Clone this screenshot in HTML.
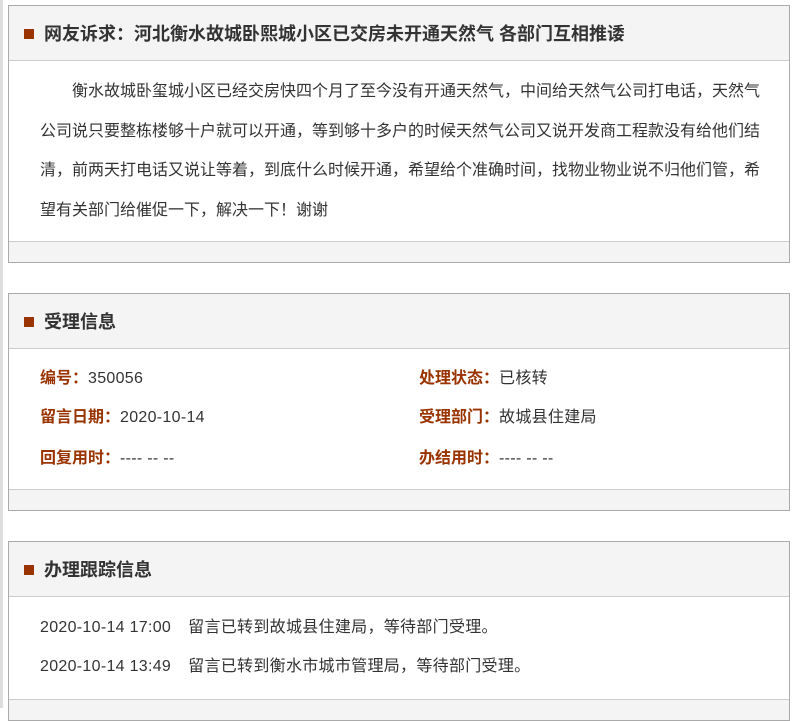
<!DOCTYPE html>
<html><head><meta charset="utf-8"><style>
body{margin:0;background:#fff;font-family:"Liberation Sans","Microsoft YaHei","Noto Sans CJK SC",sans-serif;color:#333;width:792px;height:708px;overflow:hidden;position:relative}
.strip{position:absolute;left:0;top:0;width:3px;height:708px;background:#ddd}
.box{position:absolute;left:8px;width:780px;border:1px solid #aaa;background:#fff}
.hd{height:54px;background:#f4f4f4;border-bottom:1px solid #ccc;position:relative}
.hd i{position:absolute;left:15px;top:23px;width:10px;height:10px;background:#993300}
.hd span{position:absolute;left:35px;top:0;line-height:56px;font-size:18px;font-weight:bold;color:#333}
.ft{height:20px;background:#f4f4f4;border-top:1px solid #ccc}
.txt{padding:11px 0 11px 31px;font-size:16px;line-height:39.5px;letter-spacing:0;white-space:nowrap}
.rows{position:relative}
.r{position:absolute;font-size:16px;line-height:20px;white-space:nowrap;letter-spacing:0.3px}
.r b{color:#993300;font-weight:bold;letter-spacing:0}
</style></head><body>
<div class="strip"></div>
<div class="box" style="top:5px">
<div class="hd"><i></i><span>网友诉求：河北衡水故城卧熙城小区已交房未开通天然气 各部门互相推诿</span></div>
<div class="txt"><span style="display:inline-block;width:32px"></span>衡水故城卧玺城小区已经交房快四个月了至今没有开通天然气，中间给天然气公司打电话，天然气<br>公司说只要整栋楼够十户就可以开通，等到够十多户的时候天然气公司又说开发商工程款没有给他们结<br>清，前两天打电话又说让等着，到底什么时候开通，希望给个准确时间，找物业物业说不归他们管，希<br>望有关部门给催促一下，解决一下！谢谢</div>
<div class="ft"></div>
</div>
<div class="box" style="top:293px">
<div class="hd"><i></i><span>受理信息</span></div>
<div class="rows" style="height:140px">
<div class="r" style="left:31px;top:20px"><b>编号：</b>350056</div>
<div class="r" style="left:410px;top:20px"><b>处理状态：</b>已核转</div>
<div class="r" style="left:31px;top:59px"><b>留言日期：</b>2020-10-14</div>
<div class="r" style="left:410px;top:59px"><b>受理部门：</b>故城县住建局</div>
<div class="r" style="left:31px;top:100px"><b>回复用时：</b>---- -- --</div>
<div class="r" style="left:410px;top:100px"><b>办结用时：</b>---- -- --</div>
</div>
<div class="ft"></div>
</div>
<div class="box" style="top:541px">
<div class="hd"><i></i><span>办理跟踪信息</span></div>
<div class="rows" style="height:102px">
<div class="r" style="left:31px;top:21px">2020-10-14 17:00<span style="display:inline-block;width:17px"></span>留言已转到故城县住建局，等待部门受理。</div>
<div class="r" style="left:31px;top:60px">2020-10-14 13:49<span style="display:inline-block;width:17px"></span>留言已转到衡水市城市管理局，等待部门受理。</div>
</div>
<div class="ft"></div>
</div>
</body></html>
